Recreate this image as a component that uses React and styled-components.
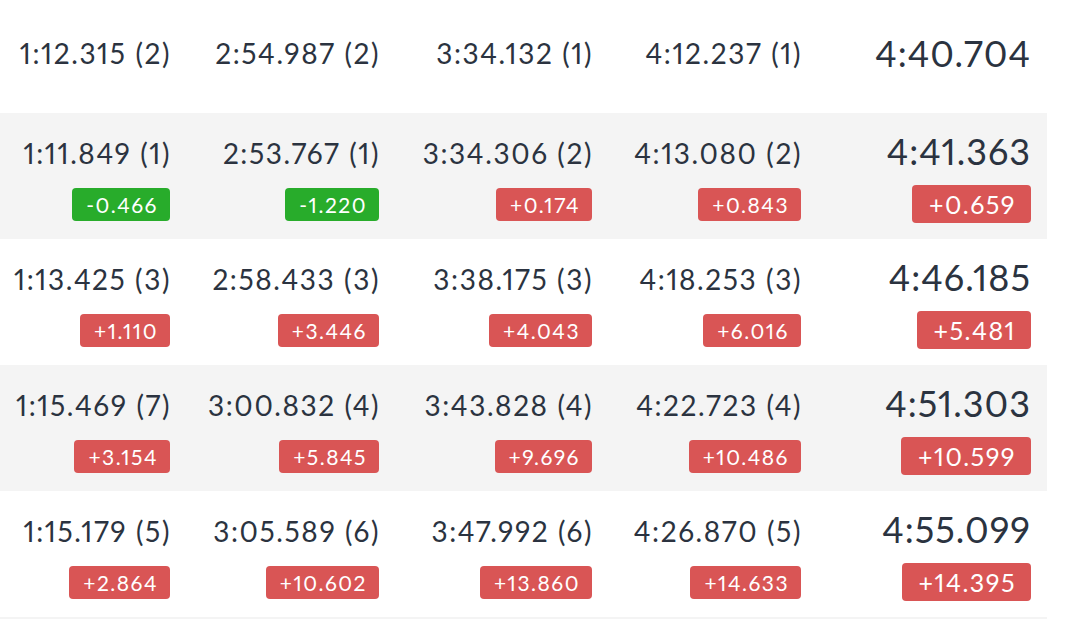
import React from 'react';
import styled, { createGlobalStyle } from 'styled-components';

const GlobalStyle = createGlobalStyle`
  body {
    margin: 0;
    background: #fff;
    font-family: Lato, 'Open Sans', sans-serif;
    font-variant-numeric: proportional-nums;
    color: #2b3340;
  }
`;

const Table = styled.div`
  width: 1047px;
`;

const Row = styled.div`
  display: grid;
  grid-template-columns: 170px 209px 213px 209px 230px;
  padding-right: 16px;
  height: ${props => (props.$head ? 113 : 126)}px;
  box-sizing: border-box;
  align-items: ${props => (props.$head ? 'center' : 'start')};
  padding-bottom: ${props => (props.$head ? 8 : 0)}px;
  background-color: ${props => (props.$shaded ? '#f4f4f4' : '#fff')};
`;

const Cell = styled.div`
  display: flex;
  flex-direction: column;
  align-items: flex-end;
  padding-top: ${props => (props.$head ? 0 : props.$final ? 20 : 26)}px;
  gap: ${props => (props.$final ? 16 : 21)}px;
`;

const Time = styled.span`
  font-size: ${props => (props.$final ? 36 : 28)}px;
  line-height: ${props => (props.$final ? 36 : 28)}px;
  letter-spacing: ${props => (props.$final ? 1 : 1.6)}px;
  margin-right: ${props => (props.$final ? 0 : -1)}px;
  white-space: nowrap;
`;

const Delta = styled.span`
  display: inline-block;
  color: #fff;
  border-radius: 4px;
  white-space: nowrap;
  letter-spacing: 1.5px;
  background-color: ${props => (props.$faster ? '#28ac2b' : '#d95555')};
  font-size: ${props => (props.$final ? 25 : 21)}px;
  line-height: ${props => (props.$final ? 38 : 33)}px;
  padding: 0 ${props => (props.$final ? 15 : 12)}px 0 ${props => (props.$final ? 17 : 14)}px;
`;

const rows = [
  {
    head: true,
    laps: ['1:12.315 (2)', '2:54.987 (2)', '3:34.132 (1)', '4:12.237 (1)'],
    total: '4:40.704',
  },
  {
    laps: ['1:11.849 (1)', '2:53.767 (1)', '3:34.306 (2)', '4:13.080 (2)'],
    deltas: ['-0.466', '-1.220', '+0.174', '+0.843'],
    total: '4:41.363',
    gap: '+0.659',
  },
  {
    laps: ['1:13.425 (3)', '2:58.433 (3)', '3:38.175 (3)', '4:18.253 (3)'],
    deltas: ['+1.110', '+3.446', '+4.043', '+6.016'],
    total: '4:46.185',
    gap: '+5.481',
  },
  {
    laps: ['1:15.469 (7)', '3:00.832 (4)', '3:43.828 (4)', '4:22.723 (4)'],
    deltas: ['+3.154', '+5.845', '+9.696', '+10.486'],
    total: '4:51.303',
    gap: '+10.599',
  },
  {
    laps: ['1:15.179 (5)', '3:05.589 (6)', '3:47.992 (6)', '4:26.870 (5)'],
    deltas: ['+2.864', '+10.602', '+13.860', '+14.633'],
    total: '4:55.099',
    gap: '+14.395',
  },
];

export default function App() {
  return (
    <>
      <GlobalStyle />
      <Table>
        {rows.map((row, i) => (
          <Row key={i} $head={row.head} $shaded={i % 2 === 1}>
            {row.laps.map((lap, j) => (
              <Cell key={j} $head={row.head}>
                <Time>{lap}</Time>
                {row.deltas && (
                  <Delta $faster={row.deltas[j].startsWith('-')}>{row.deltas[j]}</Delta>
                )}
              </Cell>
            ))}
            <Cell $head={row.head} $final>
              <Time $final>{row.total}</Time>
              {row.gap && <Delta $final>{row.gap}</Delta>}
            </Cell>
          </Row>
        ))}
        <Row $shaded />
      </Table>
    </>
  );
}
